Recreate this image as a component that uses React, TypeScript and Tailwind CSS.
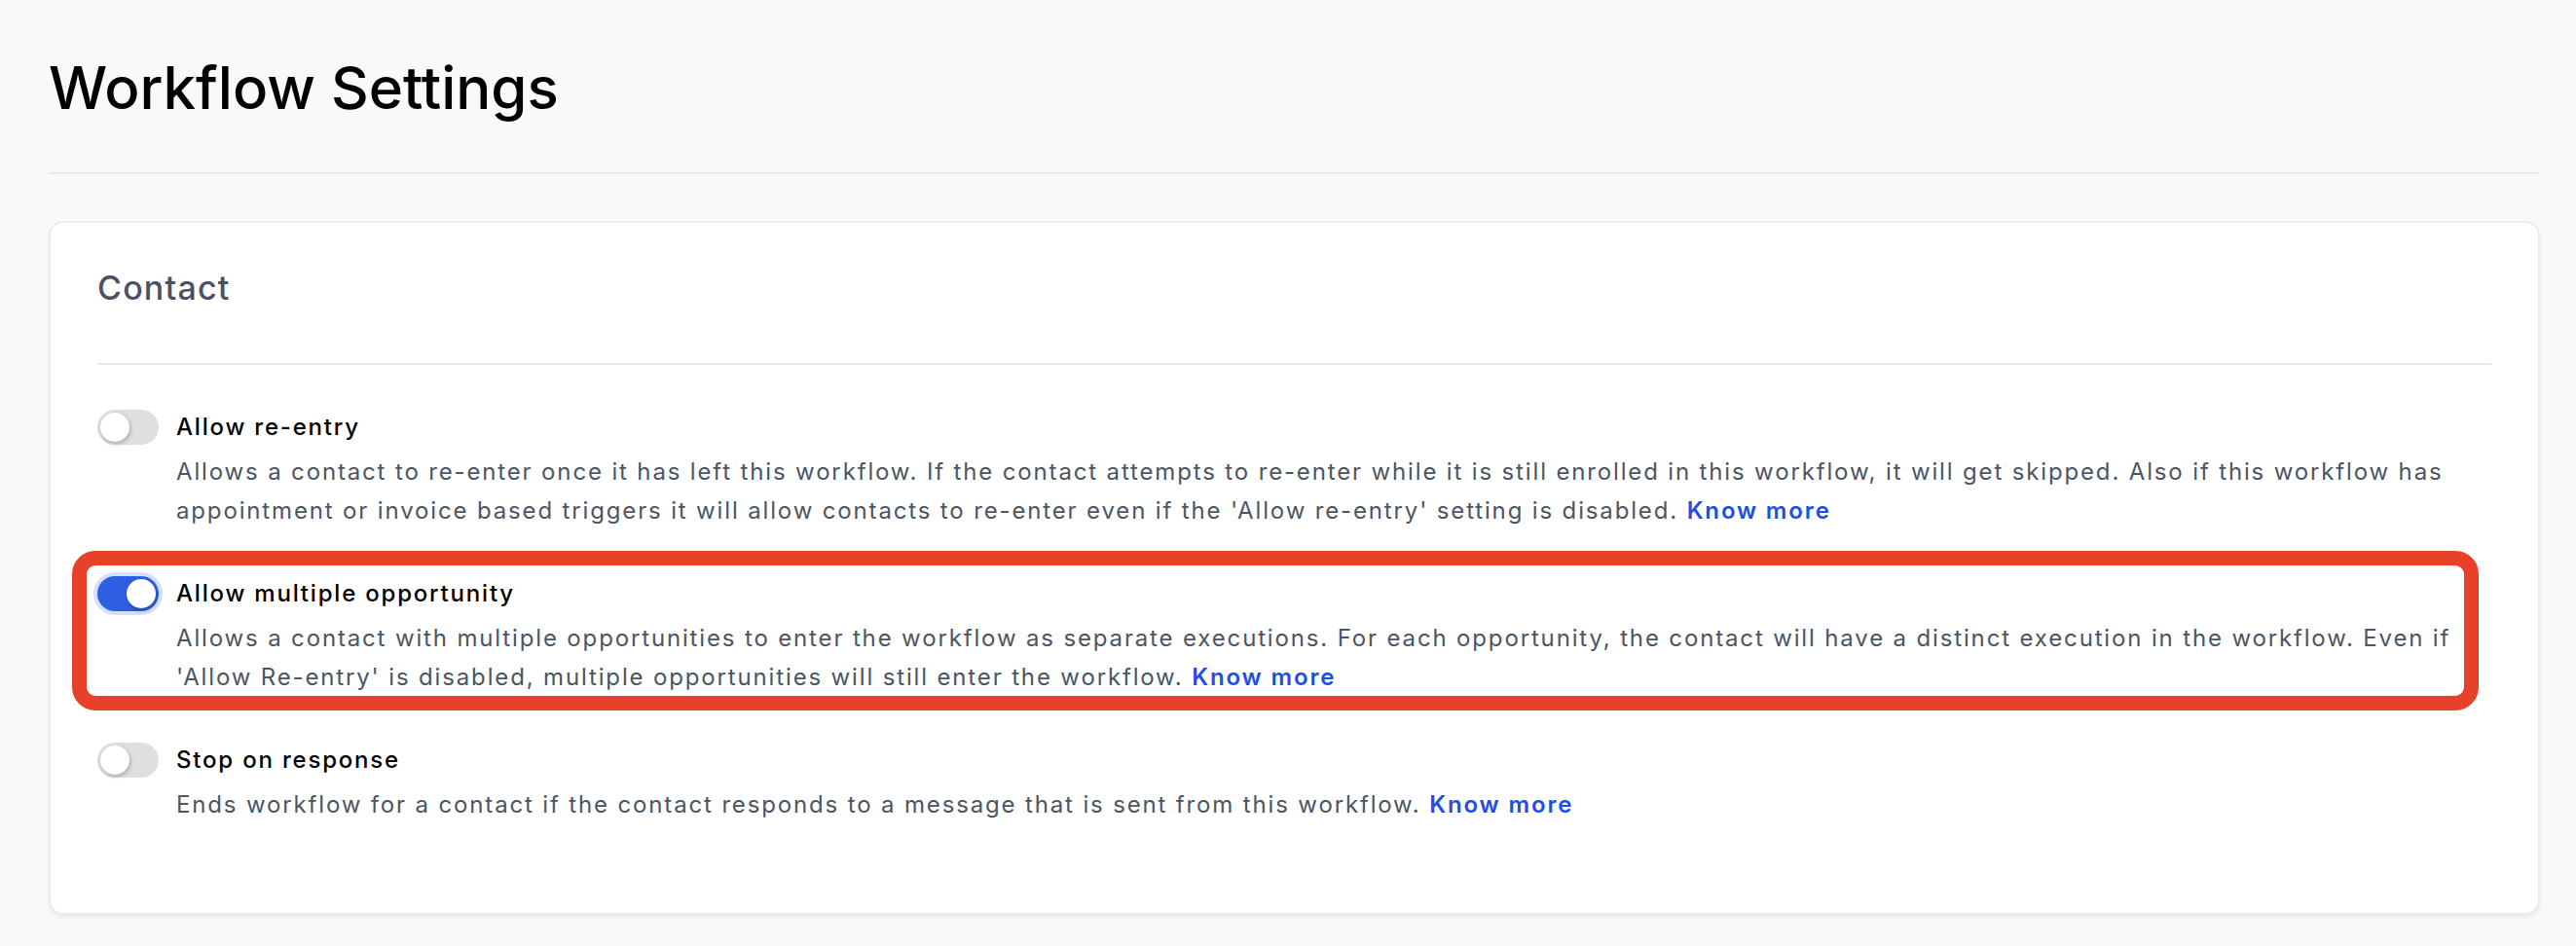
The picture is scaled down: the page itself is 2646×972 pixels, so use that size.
import React from "react";

type Setting = {
  title: string;
  description: string;
  enabled: boolean;
  highlighted?: boolean;
};

const settings: Setting[] = [
  {
    title: "Allow re-entry",
    description:
      "Allows a contact to re-enter once it has left this workflow. If the contact attempts to re-enter while it is still enrolled in this workflow, it will get skipped. Also if this workflow has appointment or invoice based triggers it will allow contacts to re-enter even if the 'Allow re-entry' setting is disabled.",
    enabled: false,
  },
  {
    title: "Allow multiple opportunity",
    description:
      "Allows a contact with multiple opportunities to enter the workflow as separate executions. For each opportunity, the contact will have a distinct execution in the workflow. Even if 'Allow Re-entry' is disabled, multiple opportunities will still enter the workflow.",
    enabled: true,
    highlighted: true,
  },
  {
    title: "Stop on response",
    description:
      "Ends workflow for a contact if the contact responds to a message that is sent from this workflow.",
    enabled: false,
  },
];

function Toggle({ on }: { on: boolean }) {
  return (
    <button
      type="button"
      role="switch"
      aria-checked={on}
      className={
        on
          ? "relative shrink-0 w-[63px] h-[36px] rounded-full bg-[#2f5fe2] ring-4 ring-[#d4dffb]"
          : "relative shrink-0 w-[63px] h-[36px] rounded-full bg-[#dfdfdf]"
      }
    >
      <span
        className={
          on
            ? "absolute top-[3px] right-[3px] w-[30px] h-[30px] rounded-full bg-white shadow-[1px_2px_4px_rgba(0,0,0,0.25)]"
            : "absolute top-[3px] left-[3px] w-[30px] h-[30px] rounded-full bg-white shadow-[1px_2px_4px_rgba(0,0,0,0.25)]"
        }
      />
    </button>
  );
}

function SettingRow({ s }: { s: Setting }) {
  return (
    <div className="relative flex items-start gap-[18px]">
      {s.highlighted && (
        <div className="pointer-events-none absolute -top-[26px] -left-[26px] right-[13px] -bottom-[14px] rounded-[24px] border-[15px] border-[#e8412a]" />
      )}
      <Toggle on={s.enabled} />
      <div className="min-w-0 flex-1">
        <div className="text-[24px] leading-[36px] font-medium text-black tracking-[1.8px]">
          {s.title}
        </div>
        <p className="mt-[8px] text-[24px] leading-[40px] text-[#4b5563] tracking-[1.85px]">
          {s.description}{" "}
          <a href="#" className="font-semibold text-[#1f4fe0]">
            Know more
          </a>
        </p>
      </div>
    </div>
  );
}

export default function App() {
  return (
    <div
      className="min-h-screen bg-[#f8f9fb] pl-[50px] pr-[37px] pt-[53px] pb-[35px]"
      style={{ fontFamily: "Inter, 'Noto Sans', sans-serif" }}
    >
      <h1 className="text-[60px] leading-[75px] font-medium text-black pb-[49px] border-b-2 border-[#e8e9ed]">
        Workflow Settings
      </h1>

      <section className="mt-[48px] rounded-[15px] border-2 border-[#ebebf0] bg-white shadow-[0_3px_4px_rgba(0,0,0,0.06)] px-[48px] pt-[46px] pb-[91px]">
        <h2 className="text-[34px] leading-[41px] font-medium text-[#4a5162] tracking-[1.2px]">
          Contact
        </h2>
        <div className="mt-[57px] h-[2px] bg-[#e9eaee]" />

        <div className="mt-[46px] flex flex-col gap-[47px]">
          {settings.map((s) => (
            <SettingRow key={s.title} s={s} />
          ))}
        </div>
      </section>
    </div>
  );
}
